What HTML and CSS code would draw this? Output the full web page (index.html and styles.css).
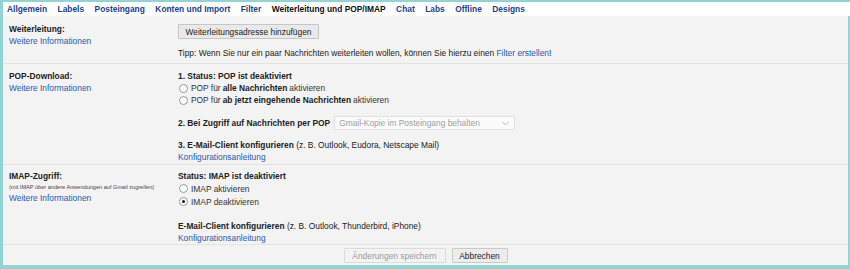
FILE: index.html
```html
<!DOCTYPE html>
<html lang="de">
<head>
<meta charset="utf-8">
<title>Weiterleitung und POP/IMAP</title>
<link rel="stylesheet" href="styles.css">
</head>
<body>
<div class="frame">
  <nav class="tabs">
    <a class="tab">Allgemein</a>
    <a class="tab">Labels</a>
    <a class="tab">Posteingang</a>
    <a class="tab">Konten und Import</a>
    <a class="tab">Filter</a>
    <span class="tab current">Weiterleitung und POP/IMAP</span>
    <a class="tab">Chat</a>
    <a class="tab">Labs</a>
    <a class="tab">Offline</a>
    <a class="tab">Designs</a>
  </nav>
  <div class="content">
    <section class="row row-fwd">
      <div class="label">
        <div class="title">Weiterleitung:</div>
        <a class="link">Weitere Informationen</a>
      </div>
      <div class="value">
        <button class="btn">Weiterleitungsadresse hinzufügen</button>
        <p class="tip">Tipp: Wenn Sie nur ein paar Nachrichten weiterleiten wollen, können Sie hierzu einen <a class="link">Filter erstellen</a>!</p>
      </div>
    </section>
    <section class="row row-pop">
      <div class="label">
        <div class="title">POP-Download:</div>
        <a class="link">Weitere Informationen</a>
      </div>
      <div class="value">
        <div class="title">1. Status: POP ist deaktiviert</div>
        <label class="radio"><span class="dot"></span>POP für <b>alle Nachrichten</b> aktivieren</label>
        <label class="radio"><span class="dot"></span>POP für <b>ab jetzt eingehende Nachrichten</b> aktivieren</label>
        <div class="access">
          <b>2. Bei Zugriff auf Nachrichten per POP</b>
          <span class="select">Gmail-Kopie im Posteingang behalten<svg class="chev" width="7" height="5" viewBox="0 0 7 5"><path d="M0.5 1 L3.5 4 L6.5 1" fill="none" stroke="#bbb" stroke-width="1"/></svg></span>
        </div>
        <div class="client"><b>3. E-Mail-Client konfigurieren</b> (z. B. Outlook, Eudora, Netscape Mail)</div>
        <a class="link">Konfigurationsanleitung</a>
      </div>
    </section>
    <section class="row row-imap">
      <div class="label">
        <div class="title">IMAP-Zugriff:</div>
        <div class="small">(mit IMAP über andere Anwendungen auf Gmail zugreifen)</div>
        <a class="link">Weitere Informationen</a>
      </div>
      <div class="value">
        <div class="title">Status: IMAP ist deaktiviert</div>
        <label class="radio r13"><span class="dot"></span>IMAP aktivieren</label>
        <label class="radio r13"><span class="dot on"></span>IMAP deaktivieren</label>
        <div class="client client2"><b>E-Mail-Client konfigurieren</b> (z. B. Outlook, Thunderbird, iPhone)</div>
        <a class="link">Konfigurationsanleitung</a>
      </div>
    </section>
    <footer class="actions">
      <button class="btn btn-save" disabled>Änderungen speichern</button>
      <button class="btn btn-cancel">Abbrechen</button>
    </footer>
  </div>
</div>
</body>
</html>
```
FILE: styles.css
```css
html, body {
  margin: 0;
  padding: 0;
}
body {
  background: #93d3d4;
  font-family: "Liberation Sans", Arial, sans-serif;
  font-size: 8.4px;
  line-height: 12px;
  color: #222;
}
.frame {
  height: 269px;
  box-sizing: border-box;
  padding: 2px 0 4px 3px;
  display: flex;
  flex-direction: column;
}
.tabs {
  background: #fff;
  height: 14px;
  display: flex;
  align-items: center;
  padding-left: 4px;
}
.tab {
  font-weight: bold;
  color: #1d3f8d;
  margin-right: 10.5px;
  line-height: 14px;
}
.tab.current {
  color: #111;
}
.content {
  flex: 1;
  background: #f3f3f3;
  margin-right: 2px;
  display: flex;
  flex-direction: column;
}
.row {
  display: grid;
  grid-template-columns: 169px 1fr;
  padding-left: 6px;
  border-bottom: 1px solid #e3e3e3;
  box-sizing: border-box;
}
.row-fwd {
  padding-top: 7px;
  height: 48px;
}
.row-pop {
  padding-top: 6px;
  height: 101px;
}
.row-imap {
  padding-top: 5px;
  height: 80px;
}
.title {
  font-weight: bold;
  color: #222;
}
.link {
  color: #2a5aa8;
  display: block;
}
.tip .link {
  display: inline;
}
.small {
  font-size: 5.6px;
  line-height: 10px;
  color: #444;
}
.btn {
  font-family: "Liberation Sans", Arial, sans-serif;
  font-size: 8.4px;
  line-height: 12px;
  color: #222;
  background: #e9e9e9;
  border: 1px solid #c6c6c6;
  border-radius: 1px;
  padding: 0;
  height: 15px;
  margin: 0;
}
.row-fwd .btn {
  margin-top: 1px;
  width: 141px;
}
.tip {
  margin: 8px 0 0;
}
.radio {
  display: flex;
  align-items: center;
  height: 12px;
  color: #333;
}
.radio.r13 {
  height: 13px;
}
.radio b {
  color: #222;
  margin: 0 2px;
}
.dot {
  width: 9px;
  height: 9px;
  box-sizing: border-box;
  border: 1px solid #9a9a9a;
  border-radius: 50%;
  background: #fff;
  margin: 0 3px 0 1px;
  display: flex;
  align-items: center;
  justify-content: center;
}
.dot.on::after {
  content: "";
  width: 3px;
  height: 3px;
  border-radius: 50%;
  background: #111;
}
.access {
  margin-top: 10px;
  display: flex;
  align-items: center;
  height: 14px;
}
.select {
  margin-left: 4px;
  width: 181px;
  height: 14px;
  box-sizing: border-box;
  border: 1px solid #e0e0e0;
  background: #fafafa;
  color: #a0a0a0;
  padding: 0 5px 0 4px;
  display: flex;
  align-items: center;
  justify-content: space-between;
}
.client {
  margin-top: 9px;
}
.client2 {
  margin-top: 12px;
}
.actions {
  display: flex;
  justify-content: center;
  gap: 6px;
  padding-top: 3px;
}
.btn-save {
  width: 102px;
  color: #9a9a9a;
  background: #f3f3f3;
  border-color: #dcdcdc;
}
.btn-cancel {
  width: 56px;
  background: #ececec;
  border-color: #c9c9c9;
}
```
